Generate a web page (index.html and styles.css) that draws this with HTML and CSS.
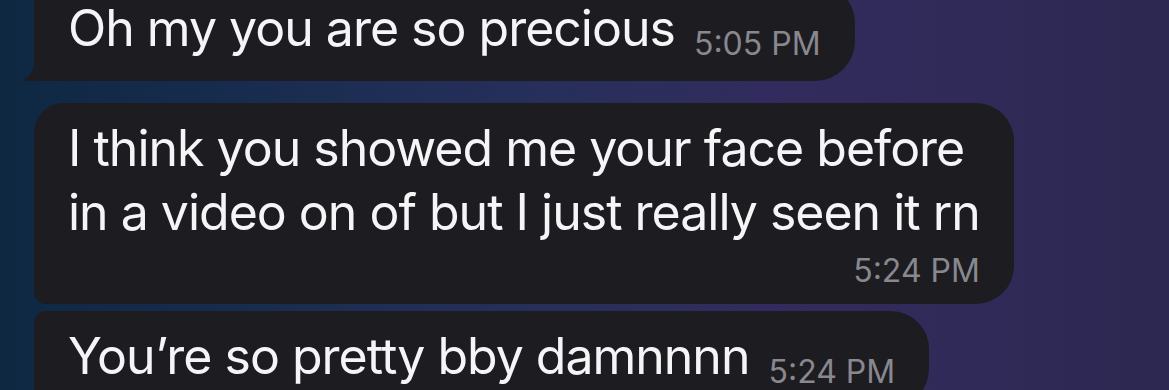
FILE: index.html
```html
<!DOCTYPE html>
<html lang="en">
<head>
<meta charset="utf-8">
<title>Chat</title>
<link rel="stylesheet" href="styles.css">
</head>
<body>
<main class="chat">
  <div class="bubble bubble--group-end">
    <span class="text">Oh my you are so precious</span><span class="time time--inline">5:05 PM</span>
    <svg class="tail" width="20" height="20" viewBox="0 0 20 20" aria-hidden="true"><path d="M13 0 C13 9 10 15 1 19.5 C5 20 12 20 20 20 L20 0 Z"/></svg>
  </div>
  <div class="bubble bubble--group-start">
    <span class="text">I think you showed me your face before<br>in a video on of but I just really seen it rn</span>
    <span class="time time--block">5:24 PM</span>
  </div>
  <div class="bubble bubble--group-mid">
    <span class="text">You’re so pretty bby damnnnn</span><span class="time time--inline">5:24 PM</span>
  </div>
</main>
</body>
</html>
```

FILE: styles.css
```css
html, body {
  margin: 0;
  padding: 0;
  width: 1169px;
  height: 390px;
  overflow: hidden;
}

body {
  background: linear-gradient(90deg, #0e2842 0%, #172c4e 20%, #262f5a 45%, #312c5d 65%, #2f2a57 85%, #2c2851 100%);
  font-family: "Inter", "Noto Sans", "Liberation Sans", sans-serif;
  color: #f5f5f7;
}

.chat {
  display: flex;
  flex-direction: column;
  align-items: flex-start;
  padding-left: 34px;
  margin-top: -17px;
}

.bubble {
  position: relative;
  box-sizing: border-box;
  background: #1c1c21;
  padding: 13px 34px 19px 34px;
  border-radius: 12px 38px 38px 12px;
  font-size: 50px;
  line-height: 64px;
  letter-spacing: -1px;
  white-space: nowrap;
}

.bubble--group-end {
  padding-bottom: 21px;
  border-radius: 12px 40px 40px 4px;
}

.bubble--group-start {
  margin-top: 22px;
  padding-bottom: 17px;
  border-radius: 30px 38px 38px 12px;
}

.bubble--group-mid {
  margin-top: 7px;
  border-radius: 12px 38px 38px 12px;
}

.time {
  font-size: 32px;
  line-height: 32px;
  letter-spacing: 0;
  color: #88888e;
}

.time--inline {
  margin-left: 19px;
  vertical-align: -9px;
}

.time--block {
  display: block;
  text-align: right;
  margin-top: 11px;
}

.tail {
  position: absolute;
  left: -13px;
  bottom: 0;
  fill: #1c1c21;
}
```
